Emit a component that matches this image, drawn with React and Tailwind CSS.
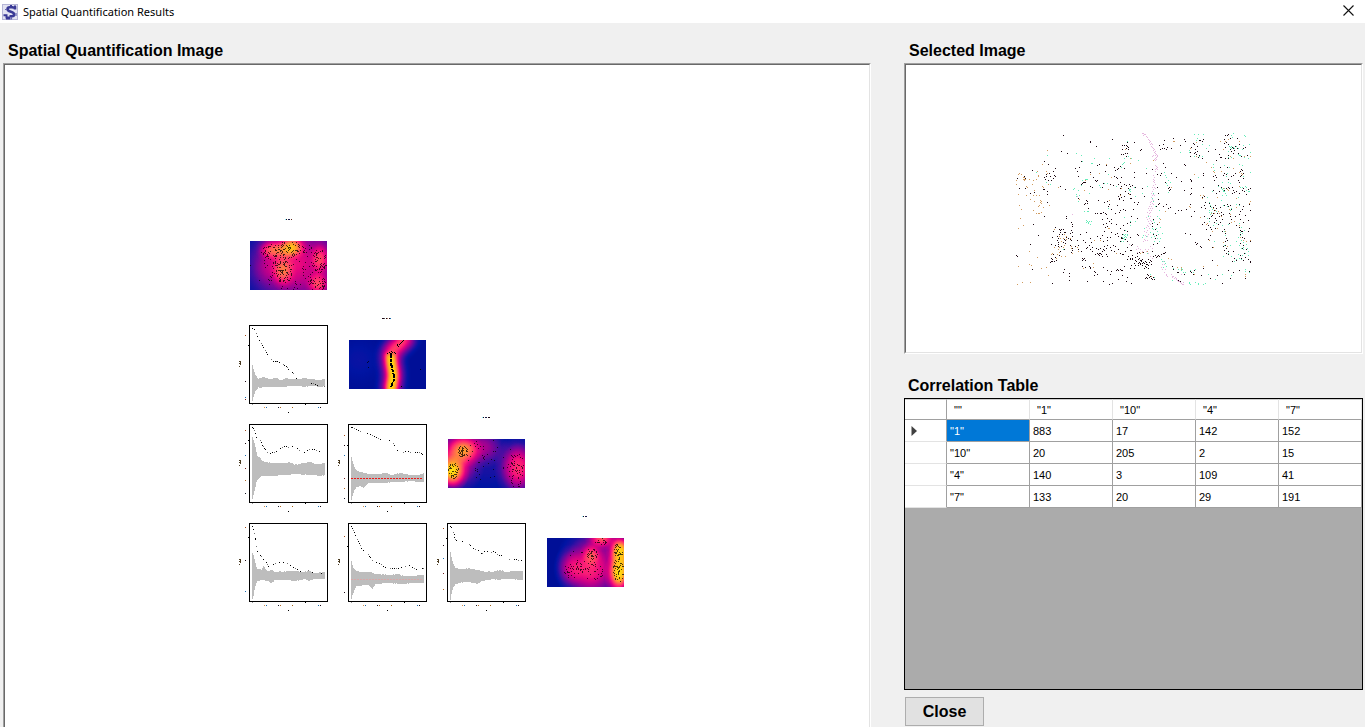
import React from "react";

/* ---------- drawing data ---------- */

const INK = "#1c0812";

// Cell positions of the tissue section, one list for each phenotype.
const CELLS = [
  {
    color: INK,
    pts: `160,31 307,43 241,49 241,52 259,64 154,79 172,85 214,91 352,52 337,61 343,61 352,64 349,61 355,67 349,70 355,73 337,73 352,85 346,85 340,88 334,88 349,94
    214,109 103,109 136,130 208,127 196,130 115,118 262,121 268,118 289,121 313,127 322,133 316,136 325,130 331,124 343,130 67,136 130,139 202,139 241,142 286,139
    109,148 118,145 136,154 133,151 103,157 109,154 121,154 124,166 130,160 115,166 106,163 205,154 250,157 256,166 262,166 259,169 304,157 319,157 322,160 313,154 334,157 373,157
    22,160 43,154 46,160 220,172 223,172 226,172 214,178 217,175 280,175 292,175 301,178 310,181 325,178 343,178 349,181 358,178 331,172 367,181 271,187 277,187
    28,190 46,190 103,193 100,193 112,199 112,208 151,184 166,193 241,184 247,187 334,184 331,190 355,190 358,196 361,199 346,199 355,205 358,208 331,208 325,214 334,217 343,214 328,220 361,220 340,226 373,232
    61,205 73,202 112,232 205,196 208,211 205,220 229,226 232,229 226,235 223,238 232,235 265,226 283,232 292,229 298,238 295,244 322,241 328,223
    103,274 70,298 235,250 262,265 271,265 274,265 286,265 289,268 256,265 280,262 304,253 316,265 331,256 340,253 328,262 346,256
    169,274 169,280 184,292 187,298 187,304 130,319 136,307 148,313 151,316 154,313 160,313 151,322 163,322 166,322 157,328 184,316 187,322 181,325 187,334 175,340 181,343 184,346 142,334 145,340 142,346 145,352 145,358 145,364 148,328 163,343 166,346 166,355 169,337 160,352
    85,331 61,358 19,391 22,394 127,337 124,358 136,361 154,364 151,379 148,391 130,388 136,397 124,400 124,409 127,409 133,409 139,406 121,412 127,403 163,373 181,361 187,370 187,376 184,382 196,364 205,361 202,367 205,373 214,379 217,400 217,406 223,400 226,406 220,403 229,370 232,367 241,373 247,367 247,379 244,352 238,361 220,346 226,352 202,346 211,328 229,322 241,340
    280,298 289,295 292,304 286,307 298,289 304,295 292,280 277,283 304,283 319,298 331,310 340,301 352,295 361,292 295,310 304,322 277,331 283,319 271,340 262,334 280,349 292,346 292,337 301,337 316,328 325,334 322,325 334,340 337,340 334,337 331,349 337,328 343,316 352,319 346,343 352,349 361,337 367,358 364,361
    259,370 265,373 271,370 277,379 280,373 283,376 262,385 268,385 271,385 265,388 268,391 274,388 277,394 256,388 283,364 292,361 289,370 301,367 304,376 310,361 316,364 313,379 319,385 325,373 331,385 337,388 340,388 346,379 352,367 361,376 367,391 367,400 355,394 361,403 352,403 289,388 292,394
    67,433 109,427 127,475 163,433 160,442 178,445 178,454 178,466 217,424 226,427 238,424 241,427 241,430 253,439 253,451 262,448 256,442 280,427 292,436 304,439 319,436 322,433 325,436 331,433 334,436 337,436 337,451 301,448 307,475 325,463 349,469 364,475 373,430 364,421 232,469 280,469 298,478 352,457 343,424
    373,52 463,46 451,73 457,70 448,61 391,76 393,73 460,58 463,70 468,73 472,67 490,40 523,43 526,49 511,61 484,70 541,70 544,67 559,52 550,55 553,58 562,64 556,73 568,46 571,46 577,49 580,43 541,82 556,82 553,85 562,79 559,88 568,91 565,97 553,94 541,94 577,100 595,79 616,73 628,88 619,106 631,97 643,43 646,31 652,31 655,28 661,40 643,55 649,52 646,67 655,58 658,64 661,73 667,67 670,70 673,76 664,79 676,64 682,70 685,85 655,91 646,100 634,97 688,58 682,40 700,70 706,67 694,94 712,91 703,97
    373,142 409,145 427,133 451,151 454,145 442,148 466,127 460,115 523,118 526,121 484,145 553,148 541,163 544,166 580,145 610,154 613,166 619,157 616,151 634,139 631,127 640,151 643,145 649,148 655,163 664,154 670,151 676,145 694,133 697,136 700,145 694,151 700,160 691,154 685,166 688,172 697,187 700,190 691,139 652,127 655,100 670,85
    397,190 375,187 360,184 445,205 403,214 442,187 466,172 472,181 478,187 481,193 475,190 544,190 523,196 544,205 541,208 571,211 583,214 610,196 619,205 628,199 625,181 634,187 643,196 649,190 655,187 658,190 667,187 670,196 673,202 667,205 679,199 688,205 697,196 703,199 715,193 721,190 709,208
    385,232 382,238 360,208 364,220 445,223 445,238 439,244 448,235 466,259 460,244 475,250 481,247 469,238 505,256 553,259 541,238 577,217 583,241 574,247 586,250 601,244 598,235 610,247 616,241 619,250 613,256 622,265 610,265 607,271 604,274 598,280 616,280 628,274 634,271 640,268 634,262 631,247 643,241 652,238 655,244 661,241 664,253 658,265 661,274 664,283 658,295 655,298 664,292 673,289 679,301 676,274 688,268 691,259 697,253 700,244 688,238 721,256 718,238 700,292 706,271 691,283 715,286
    514,169 499,157 514,256 529,253 496,265 544,274 541,328 526,325 559,358 562,355 571,364 574,367 595,343 601,331 580,151 580,187 586,232 544,169 478,196
    364,274 382,280 370,253 430,283 427,295 427,304 436,313 442,319 430,328 439,331 436,340 442,355 430,358 463,367 442,298 385,331 382,328 583,274 577,298 589,298 595,301 589,313 583,292 601,307 604,313 613,292 616,310 625,298 619,286 631,292 637,283 643,313 637,319 646,325 649,340 652,346 646,349 640,364 643,376 649,370 655,379 649,385 655,388 688,307 697,319 703,316 694,319 691,328 697,337 715,319 718,310 721,349 703,340 691,316
    556,352 607,367 700,361 697,370 709,373 703,385 691,391 694,400 700,406 706,397 715,403 721,409 691,355 673,400 679,406 667,409 715,391 721,412 670,379 646,361 607,406
    364,376 360,400 367,403 367,391 376,397 382,394 382,385 388,382 391,406 385,403 388,412 394,409 397,403 400,412 403,415 397,415 391,415 385,415 394,406 406,409 409,412 412,418 415,421 406,424 409,427 418,412 421,406 415,403 424,409 388,400 379,409 373,415 385,421 397,421 403,430 391,418 409,418 376,406 424,418 415,430 430,394 436,391 442,394 439,397 445,391 448,394 454,388 460,385 463,385 466,382 427,379 412,379 400,382 412,448 415,451 409,457 418,457 424,460 421,454 430,457 433,463 406,460 412,460 427,463 361,430 364,475 376,421
    487,424 490,430 490,433 502,442 505,466 511,469 499,463 505,442 541,439 544,442 553,436 550,448 580,430 574,451 523,448 601,460 622,451 637,475 661,460 655,436 670,442 688,436 706,460 718,439`,
  },
  {
    color: "#d09a5c",
    pts: `112,76 97,118 28,145 25,148 34,148 40,157 43,157 46,163 43,163 40,163 43,166 19,166 19,178 58,163 70,166 67,178 85,151 85,154 109,139 112,145 79,163 82,139 49,184 52,187 73,196 97,184 100,187 115,178 145,187
    25,208 49,211 70,211 79,211 88,211 61,223 28,241 34,253 73,229 91,226 91,232 94,229 94,235 88,241 85,244 100,247 118,241 70,256 79,265 85,265 88,265 94,262 31,280 40,301 25,310 133,313 163,328 169,334 160,340 169,343 181,340 148,334 151,340 154,349 163,361 160,367 148,367 145,373 184,364 184,370 187,385 205,379 202,367 142,388 148,382 154,394 124,388 127,385 58,379 82,397 25,424 58,418 64,421 94,430 22,478 37,472 61,472 115,451 109,427 139,400 166,394 133,367
    295,193 298,226 295,310 298,310 253,346 271,346 250,415 250,427 220,430 319,385 208,223 226,166 223,196 241,148 289,118 268,145 304,157 361,100 361,115 346,73 358,208 331,211 334,190
    490,49 541,70 558,94 559,52 589,112 604,127 631,49 640,73 646,49 655,43 661,94 670,100 688,49 703,94 721,94 360,115 430,106 493,49 553,148 610,139 613,142 634,139 640,190 652,193 655,196 688,184 697,148 694,145 700,154 670,130 688,142 571,211 580,211 577,220 598,232 622,217 610,250 616,256 625,259 628,265 604,265 613,265 634,274 658,253 661,268 664,292 673,289 679,247 679,220 718,235 721,229 538,244 541,247 571,277 592,295 589,298 607,319 598,346 622,310 646,319 652,364 688,301 691,337 700,346 709,349 721,346 451,283 448,292 466,259 484,187 391,385 397,382 412,379 424,454 502,427 514,427 514,433 553,448 475,400 484,403 580,424 622,421 706,448 706,454 610,367 640,352`,
  },
  {
    color: "#63ecb8",
    pts: `112,91 199,85 214,91 217,109 244,115 247,115 253,100 298,100 352,49 343,100 355,94 340,115 337,118 343,112 334,127 319,184 358,193 358,196 361,199 79,142 109,172 121,178 226,163 229,163 232,163 217,166 214,181 268,181 271,187 283,175 292,175 295,148 193,190 190,193 205,196 199,208 199,214 208,211 205,229 223,259 232,259 235,259 295,250 229,286 232,289 229,292 235,292 238,289 235,295 241,298 244,289 160,373 343,277 340,328 343,331 346,334 343,337 340,340 337,337 352,331 349,337 343,343 340,349 346,328 334,349 352,328 361,289 346,316 238,205
    553,28 565,28 580,28 559,46 562,40 577,58 598,61 589,70 511,82 538,82 538,76 568,94 577,94 670,25 664,31 667,37 703,31 706,34 661,67 664,70 670,67 673,70 658,64 664,64 655,79 679,64 655,97 664,97 685,88 688,91 691,91 685,70 700,61 718,58 697,73 703,97 688,118 697,121 715,100 721,82 610,127 613,136 643,121 658,127 649,154 652,145 721,142 700,154 637,172 625,184 634,190 637,193 640,196 643,199 646,205 649,211 640,199 643,190 637,211 655,172 661,175 697,187 691,187 706,184 709,196 715,199 718,199 709,187 607,199 592,217 598,232 601,241 604,247 598,256 604,262 607,253 598,262 601,268 619,259 634,226 640,241 652,244 661,256 664,250 679,238 688,241 685,217
    364,100 385,106 409,130 463,142 466,151 469,157 475,166 469,175 472,181 480,172 475,202 411,184 373,187 360,193 376,214 397,205 430,205 427,220 430,229 436,244 448,256 442,274 448,280 433,292 427,310 430,313 451,307 439,310 442,319 421,322 430,325 433,334 424,337 445,328 442,340 451,340 448,349 433,349 457,325 409,334 400,331 397,337 376,289 361,301 403,310 415,274 430,286
    553,94 565,157 610,118 592,280 598,289 610,301 619,295 637,301 643,319 646,331 655,298 688,295 694,307 691,322 697,325 703,316 691,331 685,337 679,349 694,346 700,352 709,358 688,361 694,370 700,373 715,379 685,388 697,391 706,385 715,391 688,400 655,385 643,361 700,367 712,370 673,409 679,403 694,403 664,394 640,394 661,361 613,349
    454,403 457,409 463,409 466,415 469,424 460,427 490,430 505,433 514,436 520,442 526,442 541,436 556,433 550,442 517,433 514,430 487,466 538,472 541,478 556,472 565,475 580,478 586,475 595,448 616,463 637,448 664,451 706,439 706,433 718,442 433,457 421,448 412,385 538,475 565,478`,
  },
  {
    color: "#e6b6df",
    pts: `187,268 202,214 358,358
    397,25 400,25 403,28 400,31 406,28 409,34 412,37 415,43 418,46 421,49 418,52 421,58 424,55 427,58 424,64 427,67 430,70 433,73 430,76 436,79 433,82 436,85 439,88 436,91 442,91 439,97 436,100 442,94 439,103 436,106 433,103 427,94 430,91 436,121 439,124 442,127 439,130 436,133 442,133 436,139 430,151 433,157 430,163 433,166 430,169 433,172 436,178 430,181 427,187 433,187 430,193 436,190 427,199 424,205 430,208 427,211 433,211 424,217 427,223 430,226 424,229 421,232 427,235 430,238 421,238 424,244 418,244 415,250 421,250 427,250 418,256 424,256 412,262 418,265 421,262 415,271 421,274 418,280 412,283 421,286 415,289 424,289 409,277 418,295 412,301 421,298 415,304 409,307 418,310 412,316 403,319 409,322 406,331 412,334 415,328 403,343 400,349 406,346 412,346 382,364 385,370 379,373 382,382 391,373 397,379 406,373 415,373 409,379 421,364 427,370
    460,409 457,418 463,418 454,427 457,433 466,433 463,442 469,451 472,454 484,448 487,454 490,454 496,457 499,463 502,466 508,469 511,472 514,475 517,478 520,472 499,460 493,460 520,478 505,469 427,400 421,394 415,385 487,457 514,448 469,448`,
  },
];

const HEAT_MAPS = [
  {
    id: "a", x: 250, y: 241, seed: 11,
    title: [[36, "#8ff2ff"], [37, INK], [39, "#181848"], [40, "#181848"], [42, "#5a2418"]],
    blobs: [
      [50, 24, 75, 60, 0.42], [34, 18, 34, 36, 0.2], [20, 9, 15, 13, 0.35], [30, 9, 22, 12, 0.5],
      [42, 6, 16, 14, 0.8], [33, 30, 14, 20, 0.55], [70, 18, 12, 20, 0.46], [68, 43, 14, 15, 0.52], [16, 28, 18, 22, 0.1],
    ],
    clusters: [[38, 24, 38, 24, 90], [40, 7, 16, 7, 65], [20, 11, 9, 8, 30], [33, 29, 9, 13, 75], [69, 20, 8, 13, 60], [67, 42, 9, 7, 45], [28, 18, 12, 6, 20]],
  },
  {
    id: "b", x: 349, y: 340, seed: 23,
    title: [[34, INK], [35, INK], [36, "#555555"], [38, INK], [39, "#b07860"], [41, INK], [42, "#1c6cae"]],
    blobs: [[10, 20, 30, 30, 0.05]],
    ridge: true,
    clusters: [[19, 25, 2, 4, 3]],
    trail: [[54, 0], [53, 1], [52, 2], [51, 3], [50, 4], [48, 4], [49, 6], [48, 5], [38, 13], [40, 12], [42, 11], [43, 12], [45, 12], [46, 13], [41, 13], [71, 29], [52, 46]],
    spine: [[42, 13], [42, 18], [42, 23], [43, 28], [44, 32], [45, 36], [45, 40], [43, 44], [42, 48]],
  },
  {
    id: "c", x: 448, y: 439, seed: 37,
    title: [[35, "#8ff2ff"], [36, INK], [38, "#181848"], [39, "#181848"], [41, INK], [42, INK]],
    blobs: [
      [8, 20, 30, 38, 0.5], [15, 11, 20, 18, 0.68], [4, 32, 18, 22, 0.97], [32, 8, 30, 22, 0.32],
      [70, 29, 24, 34, 0.52], [71, 28, 16, 26, 0.12], [40, 24, 60, 40, 0.08],
    ],
    clusters: [[14, 12, 5, 6, 50], [5, 31, 5, 8, 48], [26, 12, 16, 12, 22], [45, 20, 20, 20, 16], [68, 25, 8, 12, 42], [68, 40, 9, 8, 18], [38, 32, 14, 13, 12]],
  },
  {
    id: "d", x: 547, y: 538, seed: 53,
    title: [[36, "#8ff2ff"], [37, INK], [39, "#181848"], [40, "#181848"]],
    blobs: [
      [46, 28, 38, 44, 0.5], [24, 30, 18, 24, 0.36], [40, 34, 20, 22, 0.18], [44, 17, 12, 14, 0.45], [55, 0, 18, 13, 0.62],
      [73, 12, 15, 20, 0.92], [72, 36, 15, 26, 0.96], [74, 24, 14, 24, 0.7],
    ],
    clusters: [[45, 16, 5, 6, 32], [26, 31, 10, 9, 46], [44, 33, 12, 10, 34], [54, 3, 7, 3, 16], [71, 12, 5, 7, 34], [71, 32, 6, 12, 62], [33, 16, 14, 7, 8]],
  },
];

const RIDGE = "M60 -6 L54 1 C47 8 42 9 42 15 C41 22 45 32 44 38 C43 43 42 46 42 54";

const PLOTS = [
  {
    x: 249, y: 325, marks: [10, 56, 72, 74], label: 36,
    curve: "3,3 5,4 7,8 8,11 10,15 12,18 13,20 14,22 16,25 17,27 18,29 22,34 24,36 26,36 27,36 28,36 30,37 34,39 35,40 37,41 38,42 39,44 43,47 44,48 47,53 62,58 64,58 66,59 68,60 75,61",
    band: "3,40,75 4,44,71 5,47,68 6,50,65 7,51,64 8,53,63 9,54,61 11,53,62 14,52,61 20,54,61 26,53,61 32,55,61 36,53,61 42,54,60 50,54,60 55,53,61 62,54,60 70,55,61 75,54,60",
  },
  {
    x: 249, y: 424, marks: [6, 19, 31, 44, 56, 69], label: 36,
    curve: "3,3 4,4 5,6 6,9 7,13 11,16 12,18 13,21 14,22 15,24 16,25 18,28 21,29 23,28 25,28 27,27 31,24 33,23 35,22 37,22 39,23 43,22 48,24 50,26 55,28 58,26 60,25 63,25 65,25 67,26 70,27",
    band: "3,13,74 4,16,70 5,19,66 6,23,62 7,28,57 8,32,55 10,33,53 12,36,51 16,38,51 25,39,51 35,39,50 40,38,50 45,41,49 60,38,50 66,40,50 70,40,51 75,39,50",
  },
  {
    x: 348, y: 424, marks: [11, 21, 31, 54, 64, 74], label: 36, line: "#f01818",
    curve: "3,3 4,3 6,4 8,5 10,6 12,7 19,9 22,10 24,11 26,12 28,13 30,14 32,15 41,16 45,19 46,21 49,26 55,28 57,27 60,27 62,28 67,28 69,28 71,28 73,29 74,30",
    band: "3,33,75 4,37,71 5,40,68 6,43,65 8,46,62 12,48,61 15,49,63 20,50,58 30,50,58 37,49,58 42,51,57 53,49,57 60,51,56 70,51,57 75,49,57",
  },
  {
    x: 249, y: 523, marks: [4, 37, 68], label: 36,
    curve: "3,3 4,6 5,10 6,15 6,16 7,23 8,28 11,32 12,33 14,36 17,39 18,41 19,43 24,41 26,40 30,39 34,39 38,40 41,42 44,44 46,45 48,46 51,48 59,47 63,49 72,50",
    band: "3,30,75 4,32,72 5,36,66 6,40,62 7,44,59 8,46,57 12,47,56 14,43,56 18,48,57 22,47,59 26,49,56 40,48,56 45,48,57 55,49,55 60,48,57 65,50,55 75,49,55",
  },
  {
    x: 348, y: 523, marks: [13, 69], label: 36, line: "#d8a8a8",
    curve: "3,3 4,5 5,7 6,9 7,12 9,16 10,18 11,20 12,22 13,25 15,27 20,31 21,33 22,34 24,37 28,39 31,40 33,41 35,43 37,44 42,45 44,45 46,45 48,45 50,45 53,44 57,43 61,42 64,44 66,45 68,46 74,45 75,45",
    band: "3,38,75 4,42,71 5,45,69 6,46,66 8,48,62 11,49,62 20,49,61 24,50,65 27,51,60 40,52,59 50,51,60 55,53,60 65,53,59 75,52,59",
  },
  {
    x: 447, y: 523, marks: [5, 22, 35, 50, 66], label: 36,
    curve: "3,3 4,4 6,9 7,11 7,14 8,16 9,17 15,18 22,21 23,22 26,25 28,26 31,27 34,30 35,30 37,28 40,28 44,29 46,28 48,29 50,31 52,32 54,32 62,36 67,36 69,36 71,37 74,37",
    band: "3,29,76 4,34,70 5,38,66 6,41,63 8,45,60 12,46,59 16,46,58 22,45,58 25,46,59 30,47,60 35,48,57 45,49,55 52,47,56 60,49,55 65,48,55 75,48,56",
  },
];

const TABLE_HEAD = ['""', '"1"', '"10"', '"4"', '"7"'];
const TABLE_ROWS = [
  ['"1"', 883, 17, 142, 152],
  ['"10"', 20, 205, 2, 15],
  ['"4"', 140, 3, 109, 41],
  ['"7"', 133, 20, 29, 191],
];

/* ---------- helpers ---------- */

function makeRandom(seed) {
  let s = seed * 7919;
  return () => {
    s = (s * 1103515245 + 12345) % 2147483648;
    return s / 2147483648;
  };
}

const parse = (text) => text.trim().split(/\s+/).map((p) => p.split(",").map(Number));
const pixels = (pts) => pts.map(([x, y]) => `M${x} ${y}h1v1h-1z`).join("");

function clusterPoints({ clusters, seed }) {
  const rnd = makeRandom(seed);
  const out = [];
  clusters.forEach(([cx, cy, rx, ry, n]) => {
    for (let i = 0; i < n; i++) {
      const a = rnd() * Math.PI * 2;
      const r = Math.sqrt(rnd());
      const x = Math.round(cx + Math.cos(a) * r * rx);
      const y = Math.round(cy + Math.sin(a) * r * ry);
      if (x >= 0 && x < 77 && y >= 0 && y < 50) out.push([x, y]);
    }
  });
  return out;
}

function bandPath(text, seed) {
  const knots = parse(text);
  const rnd = makeRandom(seed);
  let d = "";
  for (let x = 3; x < 76; x++) {
    let k = 0;
    while (k < knots.length - 2 && knots[k + 1][0] <= x) k++;
    const [x0, a0, b0] = knots[k];
    const [x1, a1, b1] = knots[k + 1];
    const t = Math.min(1, (x - x0) / (x1 - x0));
    const wobble = x > 9 ? 0.8 : 0;
    const top = Math.round(a0 + (a1 - a0) * t + (rnd() - 0.5) * wobble);
    const bottom = Math.round(b0 + (b1 - b0) * t + (rnd() - 0.5) * wobble) + 1;
    d += `M${x} ${top}h1V${bottom}h-1z`;
  }
  return d;
}

/* ---------- drawings ---------- */

function HeatMap({ map }) {
  const faint = clusterPoints(map);
  return (
    <g transform={`translate(${map.x} ${map.y})`}>
      {map.title.map(([x, c]) => (
        <rect key={x} x={x - 1} y="-22" width="1" height="1" fill={c} />
      ))}
      <g clipPath="url(#heat-clip)">
        <g filter="url(#heat-colors)">
          <rect width="77" height="49" fill="#000" />
          <rect width="77" height="49" fill="#fff" opacity="0.07" />
          {map.blobs.map(([cx, cy, rx, ry, o], i) => (
            <ellipse key={i} cx={cx} cy={cy} rx={rx} ry={ry} fill="url(#bump)" opacity={o} />
          ))}
          {map.ridge && (
            <g fill="none" stroke="#fff">
              <path d={RIDGE} strokeWidth="18" opacity="0.5" filter="url(#soft-wide)" />
              <path d="M56 -4 L50 5 C44 9 43 12 43 15" strokeWidth="9" opacity="0.25" filter="url(#soft)" />
              <path d="M42 14 C41 22 45 32 44 38 C43 43 42 46 42 56" strokeWidth="10" opacity="0.9" filter="url(#soft)" />
            </g>
          )}
        </g>
      </g>
      <path d={pixels(faint)} fill="#000" opacity="0.72" />
      {map.trail && <path d={pixels(map.trail)} fill="#000" />}
      {map.spine && (
        <polyline points={map.spine.map((p) => p.join(",")).join(" ")} fill="none" stroke="#000" strokeWidth="2" strokeDasharray="5 1 3 1" shapeRendering="crispEdges" />
      )}
    </g>
  );
}

const AXIS_MARKS = [
  [15, 82, "#d8914a"], [17, 82, "#1c6cae"], [29, 82, "#181828"], [31, 82, "#b06820"], [43, 82, "#a06010"],
  [69, 82, "#1c6cae"], [71, 82, INK], [3, 79, "#999999"], [56, 79, "#000000"], [39, 87, "#000000"],
];
const MARK_COLORS = ["#a04a18", INK, "#1c6cae", "#702020", "#b06820", "#181828"];

function EnvelopePlot({ plot, index }) {
  const points = parse(plot.curve);
  return (
    <g transform={`translate(${plot.x} ${plot.y})`} shapeRendering="crispEdges">
      <path d={bandPath(plot.band, index + 3)} fill="#bdbdbd" />
      {plot.line && <path d={index === 2 ? "M3 54.5H75" : "M3 56.5H75"} stroke={plot.line} strokeDasharray="2 1" />}
      <path d={pixels(points.filter((_, i) => i % 3 !== 2))} fill="#000" />
      <path d={pixels(points.filter((_, i) => i % 3 === 2))} fill="#777" />
      <rect x="0.5" y="0.5" width="78" height="78" fill="none" stroke="#000" />
      {AXIS_MARKS.map(([x, y, c]) => (
        <rect key={`${x}-${y}`} x={x} y={y} width="1" height="1" fill={c} />
      ))}
      {plot.marks.map((y, i) => (
        <rect key={y} x="-4" y={y} width="1" height="1" fill={MARK_COLORS[i % 6]} />
      ))}
      <path d={pixels([[-10, plot.label], [-9, plot.label], [-9, plot.label + 1], [-10, plot.label + 2], [-9, plot.label + 2], [-9, plot.label + 3], [-10, plot.label + 5]])} fill="#4a3a20" />
      <rect x="-1" y={plot.marks[0] + 10} width="1" height="1" fill="#000" />
    </g>
  );
}

function QuantificationMatrix() {
  return (
    <svg width="406" height="410" viewBox="234 210 406 410" role="img" aria-label="Spatial quantification matrix">
      <defs>
        <clipPath id="heat-clip">
          <rect width="77" height="49" />
        </clipPath>
        <radialGradient id="bump">
          <stop offset="0" stopColor="#fff" />
          <stop offset="0.25" stopColor="#fff" stopOpacity="0.86" />
          <stop offset="0.5" stopColor="#fff" stopOpacity="0.52" />
          <stop offset="0.75" stopColor="#fff" stopOpacity="0.16" />
          <stop offset="1" stopColor="#fff" stopOpacity="0" />
        </radialGradient>
        <filter id="soft-wide" filterUnits="userSpaceOnUse" x="-20" y="-20" width="120" height="90">
          <feGaussianBlur stdDeviation="4" />
        </filter>
        <filter id="soft" filterUnits="userSpaceOnUse" x="-20" y="-20" width="120" height="90">
          <feGaussianBlur stdDeviation="2" />
        </filter>
        <filter id="heat-colors" filterUnits="userSpaceOnUse" x="0" y="0" width="77" height="49" colorInterpolationFilters="sRGB">
          <feComponentTransfer>
            <feFuncR type="table" tableValues="0 0 0.25 0.5 0.72 0.9 1 1 1 1 1" />
            <feFuncG type="table" tableValues="0.02 0.08 0.06 0.02 0 0.02 0.15 0.35 0.55 0.75 0.95" />
            <feFuncB type="table" tableValues="0.48 0.64 0.64 0.6 0.55 0.5 0.45 0.35 0.22 0.1 0.05" />
          </feComponentTransfer>
        </filter>
      </defs>
      {HEAT_MAPS.map((m) => (
        <HeatMap key={m.id} map={m} />
      ))}
      {PLOTS.map((p, i) => (
        <EnvelopePlot key={i} plot={p} index={i} />
      ))}
    </svg>
  );
}

function CellScatter() {
  return (
    <svg width="248" height="168" viewBox="0 0 248 168" shapeRendering="crispEdges" role="img" aria-label="Selected image">
      {CELLS.map(({ color, pts }) => (
        <path key={color} fill={color} d={pixels(parse(pts).map(([x, y]) => [Math.floor(x / 3), Math.floor(y / 3)]))} />
      ))}
    </svg>
  );
}

function AppIcon() {
  return (
    <svg width="16" height="16" viewBox="0 0 16 16" aria-hidden="true">
      <rect x="0.5" y="0.5" width="15" height="15" fill="#e3e3f1" stroke="#b5b5d6" />
      <g fill="none" stroke="#3a3a96" strokeLinecap="butt">
        <path d="M13 5.5V3.5H10.5M11 3.2H7.5C5 3.2 5 6.2 7 7L10.5 8.4C13 9.6 12.4 12.2 10 12.2H7.5" strokeWidth="2.6" />
        <path d="M1.5 11.2H4.5V13.5H8M4 14.6H8.5M9 1V3M13 1.5V5" strokeWidth="2" />
        <path d="M14 9V12M3 5.5H5M9.5 13V15.5" strokeWidth="1.2" stroke="#6565b0" />
      </g>
    </svg>
  );
}

/* ---------- page ---------- */

const sunken =
  "border border-t-[#a0a0a0] border-l-[#a0a0a0] border-r-white border-b-white bg-white";
const sunkenInner =
  "flex flex-1 justify-center border border-t-[#696969] border-l-[#696969] border-r-[#e3e3e3] border-b-[#e3e3e3]";
const heading = "text-[16px] leading-5 font-bold";

export default function App() {
  return (
    <div className="flex min-h-screen flex-col bg-[#f0f0f0] font-['Liberation_Sans',Arial,sans-serif] text-black">
      <header className="flex h-[23px] items-center bg-white pl-0.5">
        <AppIcon />
        <h1 className="ml-[5px] flex-1 font-['Noto_Sans','Segoe_UI',sans-serif] text-[11px] leading-4">Spatial Quantification Results</h1>
        <button type="button" aria-label="Close window" className="flex h-5 w-[33px] items-center justify-center self-start">
          <svg width="11" height="11" viewBox="0 0 11 11" aria-hidden="true">
            <path d="M0.5 0.5L10.5 10.5M10.5 0.5L0.5 10.5" stroke="#111" strokeWidth="1.1" />
          </svg>
        </button>
      </header>

      <main className="flex flex-1 gap-[33px] pt-[18px] pr-0.5 pl-[3px]">
        <section className="flex flex-1 flex-col">
          <h2 className={`pl-[5px] ${heading}`}>Spatial Quantification Image</h2>
          <div className={`mt-0.5 flex flex-1 border-b-0 ${sunken}`}>
            <div className={`border-b-0 pt-[145px] ${sunkenInner}`}>
              <QuantificationMatrix />
            </div>
          </div>
        </section>

        <section className="flex w-[459px] shrink-0 flex-col">
          <h2 className={`pl-[5px] ${heading}`}>Selected Image</h2>
          <div className={`mt-0.5 flex h-[291px] ${sunken}`}>
            <div className={`items-center ${sunkenInner}`}>
              <CellScatter />
            </div>
          </div>

          <h2 className={`mt-[22px] pl-1 ${heading}`}>Correlation Table</h2>
          <div className="mt-0.5 flex-1 border border-black bg-[#ababab]">
            <table className="w-full table-fixed border-separate border-spacing-0 bg-white text-left text-[11px] leading-4">
              <thead>
                <tr className="h-[21px]">
                  <td className="w-[42px] border-t border-r border-b border-[#a0a0a0] border-t-[#d0d0d0] p-0" />
                  {TABLE_HEAD.map((h) => (
                    <th key={h} scope="col" className="border-t border-r border-b border-t-[#d0d0d0] border-r-[#e3e3e3] border-b-[#a0a0a0] p-0 pl-[7px] font-normal">
                      {h}
                    </th>
                  ))}
                </tr>
              </thead>
              <tbody>
                {TABLE_ROWS.map((row, r) => (
                  <tr key={row[0]} className="h-[22px]">
                    <td className="border-r border-b border-r-[#a0a0a0] border-b-[#e3e3e3] p-0 pl-1.5">
                      {r === 0 && (
                        <svg width="6" height="10" viewBox="0 0 6 10" className="block" aria-label="Current row">
                          <path d="M0.5 0V10L6 5z" fill="#404040" />
                        </svg>
                      )}
                    </td>
                    {row.map((v, c) => (
                      <td key={c} className={`border-r border-b border-[#a0a0a0] p-0 pl-[3px] ${r === 0 && c === 0 ? "bg-[#0078d7] text-white" : ""}`}>
                        {v}
                      </td>
                    ))}
                  </tr>
                ))}
              </tbody>
            </table>
          </div>

          <button type="button" className="mt-[7px] mb-px ml-px h-[29px] w-[79px] border border-[#adadad] bg-[#e1e1e1] text-[16px] leading-5 font-bold">
            Close
          </button>
        </section>
      </main>
    </div>
  );
}
